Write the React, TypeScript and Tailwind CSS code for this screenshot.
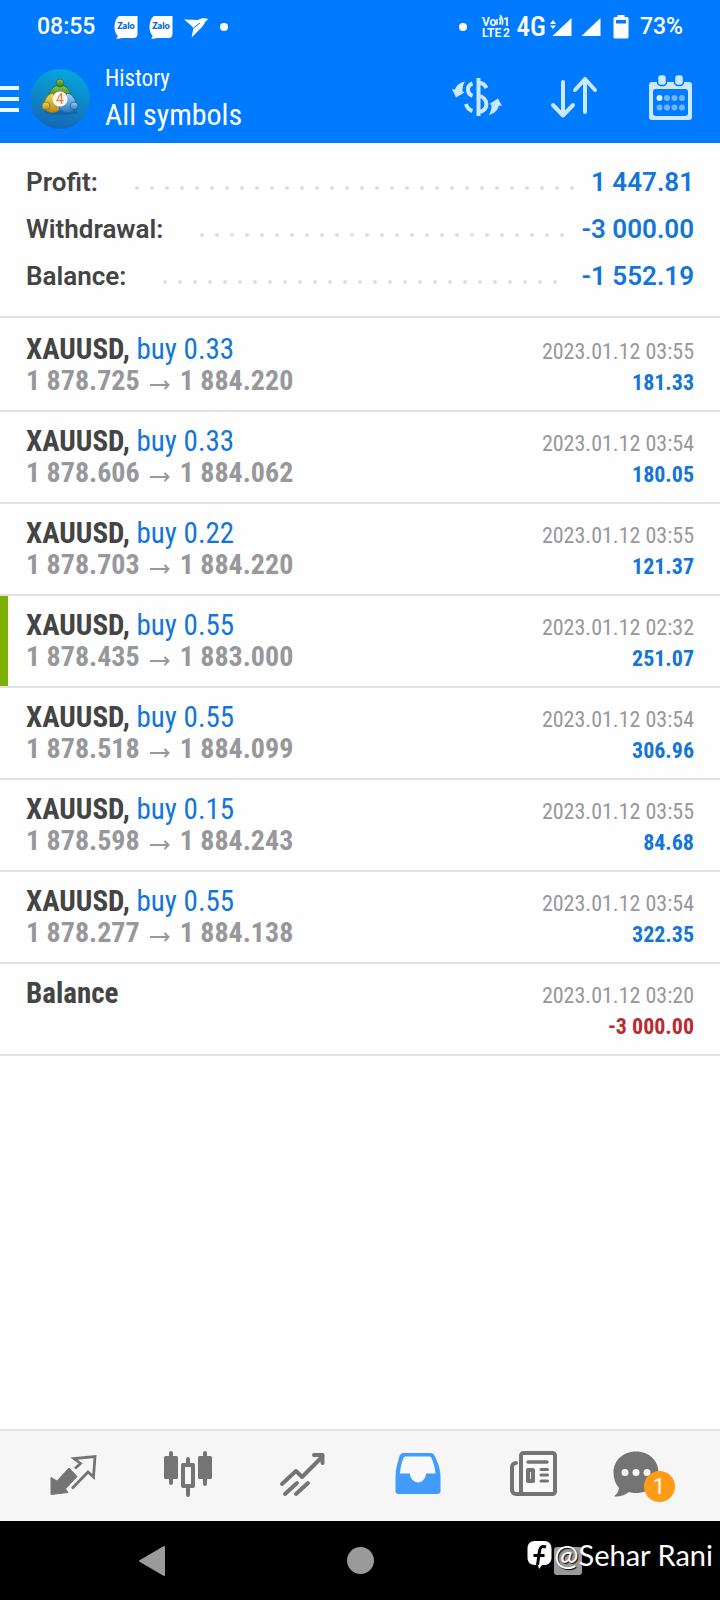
import { ReactNode } from "react";

const CONDENSED =
  "font-['Roboto_Condensed','Roboto','Liberation_Sans_Narrow',sans-serif]";

const summary = [
  { label: "Profit:", value: "1 447.81" },
  { label: "Withdrawal:", value: "-3 000.00" },
  { label: "Balance:", value: "-1 552.19" },
];

const deals = [
  { id: 1, volume: "0.33", open: "1 878.725", close: "1 884.220", time: "2023.01.12 03:55", profit: "181.33" },
  { id: 2, volume: "0.33", open: "1 878.606", close: "1 884.062", time: "2023.01.12 03:54", profit: "180.05" },
  { id: 3, volume: "0.22", open: "1 878.703", close: "1 884.220", time: "2023.01.12 03:55", profit: "121.37" },
  { id: 4, volume: "0.55", open: "1 878.435", close: "1 883.000", time: "2023.01.12 02:32", profit: "251.07", marked: true },
  { id: 5, volume: "0.55", open: "1 878.518", close: "1 884.099", time: "2023.01.12 03:54", profit: "306.96" },
  { id: 6, volume: "0.15", open: "1 878.598", close: "1 884.243", time: "2023.01.12 03:55", profit: "84.68" },
  { id: 7, volume: "0.55", open: "1 878.277", close: "1 884.138", time: "2023.01.12 03:54", profit: "322.35" },
];

function ZaloIcon() {
  return (
    <svg width="24" height="24" viewBox="0 0 24 24">
      <path
        d="M5 1H23.500V19c0 2.500-1.500 4-4 4H8c-2 .8-4 .9-6 .5 1-.8 1.500-1.500 1.700-2.500C1.500 18.500.5 15.500.5 12 .5 7 2 3 5 1z"
        fill="#fff"
      />
      <text
        x="12"
        y="14"
        textAnchor="middle"
        fontSize="9"
        fontWeight="800"
        fontFamily="Lato, sans-serif"
        fill="#0a6cd8"
      >
        Zalo
      </text>
    </svg>
  );
}

function StatusBar() {
  return (
    <div className="flex h-[54px] items-center justify-between px-[37px] font-[Roboto,sans-serif] text-[23px] font-medium">
      <div className="flex items-center">
        <span>08:55</span>
        <div className="ml-[19px] flex items-center gap-[11px]">
          <ZaloIcon />
          <ZaloIcon />
          <svg width="25" height="24" viewBox="0 0 25 24" fill="#fff">
            <path d="M0 4.500l14 .5C17 3 21 3 24.500 4 21 6 20.500 9 18.500 11.500L7.500 22.500l2-9.500-4-4z" />
            <path d="M9.500 13L16 8" stroke="#007aff" strokeWidth="1" />
          </svg>
          <span className="size-2 rounded-full bg-white" />
        </div>
      </div>
      <div className="flex items-center">
        <span className="mr-[14px] size-2 rounded-full bg-white" />
        <svg className="overflow-visible" width="32" height="32" viewBox="-1 -4 32 32" fill="#fff" fontFamily="Roboto, sans-serif" fontWeight="600">
          <text x="0" y="11" fontSize="12">Vo</text>
          <text x="21" y="11" fontSize="12">1</text>
          <text x="0" y="22" fontSize="12">LTE</text>
          <text x="21" y="22" fontSize="12">2</text>
          <path d="M15 4v6M17.500 2.500q2 3.500 0 7M18 0q4 5 2 10" fill="none" stroke="#fff" strokeWidth="1.500" />
        </svg>
        <span className={`${CONDENSED} ml-1 text-[27px]`}>4G</span>
        <svg className="ml-1" width="22" height="20" viewBox="0 0 22 20" fill="#fff">
          <path d="M21.500 1v18H2.500zM3 3l3 4H0zM3 12L0 8.500h6z" />
        </svg>
        <svg className="ml-[9px]" width="20" height="20" viewBox="0 0 20 20" fill="#fff">
          <path d="M19.500 1v18H.5z" />
        </svg>
        <svg className="ml-3" width="16" height="26" viewBox="0 0 16 26">
          <path d="M4.500 1h7v2H14a1.500 1.500 0 0 1 1.500 1.500V23A1.500 1.500 0 0 1 14 24.500H2A1.500 1.500 0 0 1 .5 23V4.500A1.500 1.500 0 0 1 2 3h2.500z" fill="#fff" />
          <path d="M3 6h10v3.500H3z" fill="#007aff" />
        </svg>
        <span className="ml-[11px]">73%</span>
      </div>
    </div>
  );
}

function AppLogo() {
  return (
    <svg width="60" height="60" viewBox="0 0 60 60">
      <defs>
        <linearGradient id="disc" x1="0.6" y1="0" x2="0.4" y2="1">
          <stop offset="0" stopColor="#05a7dc" />
          <stop offset="1" stopColor="#1567b4" />
        </linearGradient>
        <linearGradient id="green" x1="0" y1="0" x2="0" y2="1">
          <stop offset="0" stopColor="#8cc252" />
          <stop offset="1" stopColor="#2f7a2c" />
        </linearGradient>
        <linearGradient id="gold" x1="0" y1="0" x2="0" y2="1">
          <stop offset="0" stopColor="#f0dc55" />
          <stop offset="1" stopColor="#b38a1c" />
        </linearGradient>
        <linearGradient id="sky" x1="0" y1="0" x2="0" y2="1">
          <stop offset="0" stopColor="#9fd4f7" />
          <stop offset="1" stopColor="#2c77c2" />
        </linearGradient>
      </defs>
      <circle cx="30" cy="30" r="30" fill="url(#disc)" />
      <ellipse cx="31" cy="43" rx="17" ry="3" fill="#0c4f92" opacity="0.4" />
      <path d="M19 28c0-7 5-12 11-12s11 5 11 12c-3 4-6 1-11 1s-8 3-11-1z" fill="url(#green)" stroke="#2c6b33" strokeWidth="0.800" />
      <path d="M14 39c-1-7 3-14 9-15 2 6 6 9 8 15-3 6-14 6-17 0z" fill="url(#gold)" stroke="#8a6d1b" strokeWidth="0.800" />
      <path d="M46 39c1-7-3-14-9-15-2 6-6 9-8 15 3 6 14 6 17 0z" fill="url(#sky)" stroke="#225f9c" strokeWidth="0.800" />
      <circle cx="30" cy="14" r="4" fill="url(#green)" stroke="#2c6b33" strokeWidth="0.800" />
      <circle cx="16" cy="37" r="4" fill="url(#gold)" stroke="#8a6d1b" strokeWidth="0.800" />
      <circle cx="44" cy="37" r="4" fill="url(#sky)" stroke="#225f9c" strokeWidth="0.800" />
      <circle cx="30" cy="30" r="7.500" fill="#fdfaf5" />
      <text x="30" y="35" textAnchor="middle" fontSize="14" fontFamily="Roboto, sans-serif" fill="#ea7a3c">
        4
      </text>
    </svg>
  );
}

function Header() {
  return (
    <header className="bg-[#007aff] text-white">
      <StatusBar />
      <div className="flex h-[89px] items-center pr-[26px]">
        <button aria-label="Menu" className="flex w-[19px] flex-col gap-[7px]">
          <span className="h-1 bg-[#e6faff]" />
          <span className="h-1 bg-[#e6faff]" />
          <span className="h-1 bg-[#e6faff]" />
        </button>
        <div className="ml-[11px]">
          <AppLogo />
        </div>
        <div className={`${CONDENSED} ml-[15px]`}>
          <p className="text-[23px] leading-8">History</p>
          <h1 className="text-[30px] leading-10">All symbols</h1>
        </div>
        <div className="ml-auto flex items-center gap-[48px] pb-1 text-[#cbe8ff]">
          <button aria-label="Currency">
            <svg width="50" height="44" viewBox="0 0 50 44" fill="none" stroke="currentColor" strokeWidth="4">
              <path d="M26.500 3v38" />
              <path d="M20.500 8.500c-6 2-6 10 0 12.500M14 29c1 4 3.500 6 6.500 7" />
              <path d="M28 8c3 0 5 2 6.500 5M28 21c8 3 9 13 0 16" />
              <path d="M0 14l3 .5C4.500 10 8 7.500 13 6.500c-2 3-2.500 6-2.500 10l2 1L4 22.500z" fill="currentColor" stroke="none" />
              <path d="M50 31l-3-.5c-1.500 5-4.500 8-10 9.500 2-4 2.500-6 2.500-10l-2-1L46 23.500z" fill="currentColor" stroke="none" />
            </svg>
          </button>
          <button aria-label="Sort">
            <svg width="48" height="44" viewBox="0 0 48 44" fill="none" stroke="currentColor" strokeWidth="4" strokeLinecap="round" strokeLinejoin="round">
              <path d="M13 7v33M3 30l10 10.500L23 30" />
              <path d="M35 37V4M25 15L35 4l10 11" />
            </svg>
          </button>
          <button aria-label="Calendar">
            <svg width="48" height="48" viewBox="-2 0 48 48">
              <path d="M4 9h37a3 3 0 0 1 3 3v32a3 3 0 0 1-3 3H4a3 3 0 0 1-3-3V12a3 3 0 0 1 3-3z" fill="currentColor" />
              <rect x="5" y="16" width="35" height="27" rx="3" fill="#007aff" />
              <g fill="currentColor" stroke="#007aff" strokeWidth="1.500">
                <rect x="9.500" y="1.500" width="9" height="11" rx="3.500" />
                <rect x="26.500" y="1.500" width="9" height="11" rx="3.500" />
              </g>
              <circle cx="11.500" cy="25" r="3" fill="#d9f0ff" />
              <g fill="#6fb6ff">
                <circle cx="19" cy="25" r="3" />
                <circle cx="26.500" cy="25" r="3" />
                <circle cx="34" cy="25" r="3" />
                <circle cx="11.500" cy="34.500" r="3" />
                <circle cx="19" cy="34.500" r="3" />
                <circle cx="26.500" cy="34.500" r="3" />
                <circle cx="34" cy="34.500" r="3" />
              </g>
            </svg>
          </button>
        </div>
      </div>
    </header>
  );
}

// Row of leader dots, only as many as fit on one line
function Leader() {
  return (
    <div className="mt-[11px] mr-[17px] ml-[37px] flex h-1 flex-1 flex-wrap gap-x-[11px] gap-y-2 overflow-hidden">
      {Array.from({ length: 60 }, (_, i) => (
        <span key={i} className="size-1 rounded-full bg-[#dedede]" />
      ))}
    </div>
  );
}

function Summary() {
  return (
    <dl className="border-b-2 border-[#e2e2e2] px-[26px] py-4 font-[Roboto,sans-serif] text-[26px] leading-[47px] font-semibold">
      {summary.map((item) => (
        <div key={item.label} className="flex items-center">
          <dt className="text-[#444]">{item.label}</dt>
          <Leader />
          <dd className="text-[#1475d8]">{item.value}</dd>
        </div>
      ))}
    </dl>
  );
}

type RowProps = {
  title: ReactNode;
  prices?: ReactNode;
  time: string;
  amount: ReactNode;
  marked?: boolean;
};

function Row({ title, prices, time, amount, marked }: RowProps) {
  return (
    <li className="relative border-b-2 border-[#e2e2e2] px-[26px] py-[13px]">
      {marked && <span className="absolute inset-y-0 left-0 w-2 bg-[#7db000]" />}
      <div className="flex items-baseline justify-between">
        <span className="text-[29px] leading-8 font-bold text-[#444]">{title}</span>
        <time className="text-[22px] leading-6 text-[#97989b]">{time}</time>
      </div>
      <div className="flex items-baseline justify-between">
        <span className="flex items-baseline text-[28px] leading-8 font-bold text-[#97989b]">
          {prices ?? "\u00a0"}
        </span>
        <span className="text-[22px] leading-6 font-bold">{amount}</span>
      </div>
    </li>
  );
}

function History() {
  return (
    <ul className={`${CONDENSED} pt-0.5`}>
      {deals.map((deal) => (
        <Row
          key={deal.id}
          marked={deal.marked}
          title={
            <>
              XAUUSD, <span className="font-normal text-[#1475d8]">buy {deal.volume}</span>
            </>
          }
          prices={
            <>
              {deal.open}
              <svg className="mx-[10px]" width="20" height="12" viewBox="0 0 20 12" fill="none" stroke="currentColor" strokeWidth="2">
                <path d="M0 7h18.500M14.500 3L18.500 7l-4 4" />
              </svg>
              {deal.close}
            </>
          }
          time={deal.time}
          amount={<span className="text-[#1475d8]">{deal.profit}</span>}
        />
      ))}
      <Row
        title="Balance"
        time="2023.01.12 03:20"
        amount={<span className="text-[#b92b30]">-3 000.00</span>}
      />
    </ul>
  );
}

function TabBar() {
  return (
    <nav className="grid grid-cols-6 border-t-2 border-[#e2e2e2] bg-[#f6f6f6] px-[15px] py-[19px] text-[#747474] *:flex *:justify-center">
      <button aria-label="Quotes">
        <svg width="48" height="52" viewBox="0 0 48 52">
          <path d="M2 27.500l6 3.500L20 18l8 8.500L16.500 39l2.500 3.500L2 44.500z" fill="currentColor" stroke="currentColor" strokeLinejoin="round" />
          <path d="M26 18.500l5.500-5-6.500-5L46 6.500 44.500 27 39 22 23 38.500" fill="none" stroke="currentColor" strokeWidth="2.800" />
        </svg>
      </button>
      <button aria-label="Charts">
        <svg width="48" height="52" viewBox="0 0 48 52" fill="currentColor">
          <rect x="0" y="6" width="14" height="23" rx="1.500" />
          <rect x="34" y="6" width="14" height="23" rx="1.500" />
          <path d="M7 3v30M41 3v31M24 9v6M24 38v7" stroke="currentColor" strokeWidth="4" strokeLinecap="round" />
          <rect x="19" y="15" width="10" height="21" fill="none" stroke="currentColor" strokeWidth="4" strokeLinejoin="round" />
        </svg>
      </button>
      <button aria-label="Trade">
        <svg width="48" height="52" viewBox="1 -1 48 52" fill="none" stroke="currentColor" strokeWidth="4" strokeLinecap="round" strokeLinejoin="round">
          <path d="M4 33l14-13 6 6L44 6M36 4h8.500v8" />
          <path d="M7 43l12-11M18 43l12-11" />
        </svg>
      </button>
      <button aria-label="History">
        <svg width="48" height="52" viewBox="0 0 48 52">
          <path d="M9 3h28a4 4 0 0 1 3.500 2.500C44 13 46.500 19 46.500 27v14a3 3 0 0 1-3 3h-39a3 3 0 0 1-3-3V27c0-8 2-14 4-21a4 4 0 0 1 3.500-3z" fill="#429bff" />
          <path d="M11.500 6.500h24a2 2 0 0 1 2 1.500c2 5 3.500 9 4 15.500h-9.500a8 9 0 0 1-16 0H6C6.500 17 7.500 13 9.500 8a2 2 0 0 1 2-1.500z" fill="#f9f9f9" />
        </svg>
      </button>
      <button aria-label="News">
        <svg width="48" height="52" viewBox="0 0 48 52" fill="none" stroke="currentColor" strokeWidth="4" strokeLinecap="round" strokeLinejoin="round">
          <rect x="12" y="3" width="34" height="41" rx="2.500" fill="#fafafa" />
          <path d="M7 13a4 4 0 0 0-4 4v23a4 4 0 0 0 4 4h8" />
          <path d="M19 12h19" strokeWidth="3.500" />
          <rect x="19" y="20" width="5" height="11" />
          <path d="M32 19.500h6.500M32 25h6.500M32 31h6.500" strokeWidth="3" />
        </svg>
      </button>
      <button aria-label="Messages, 1 unread">
        <svg width="70" height="52" viewBox="2 0 70 52">
          <path d="M23 1.500c13 0 22.500 9 22.500 21S36 43 23 43c-2.500 0-5-.3-7-1-3.500 3-8.500 5-15 4.500 3-2.500 4.500-5 5-8.500C2.500 34 .5 29 .5 22.500c0-12 9.500-21 22.500-21z" fill="currentColor" transform="translate(2 0)" />
          <g fill="#f6f6f6">
            <circle cx="14" cy="22.500" r="3.500" />
            <circle cx="25" cy="22.500" r="3.500" />
            <circle cx="36" cy="22.500" r="3.500" />
          </g>
          <circle cx="48.500" cy="36.500" r="15.500" fill="#ff9b17" />
          <text x="48" y="44" textAnchor="middle" fontSize="22" fontFamily="Roboto, sans-serif" fill="#fff">
            1
          </text>
        </svg>
      </button>
    </nav>
  );
}

function SystemNav() {
  return (
    <div className="relative grid h-[79px] grid-cols-3 items-center bg-black px-[48px] text-[#9a9a9a] *:flex *:justify-center">
      <button aria-label="Back">
        <svg width="28" height="32" viewBox="0 0 28 32">
          <path d="M26 2v28L2 16z" fill="currentColor" stroke="currentColor" strokeWidth="2" strokeLinejoin="round" />
        </svg>
      </button>
      <button aria-label="Home">
        <span className="size-[27px] rounded-full bg-[#9a9a9a]" />
      </button>
      <button aria-label="Recents">
        <span className="size-7 rounded-[3px] bg-[#9a9a9a]" />
      </button>
      <div className="absolute top-4 right-[7px] items-center gap-0.5 font-[Lato,sans-serif] text-[29px] leading-9 text-white">
        <svg width="25" height="30" viewBox="0 0 25 30">
          <path d="M8 1h9c5 0 7.500 3 7.500 7.500v9c0 4-2 7-6.500 7.500h-3L12 29l-1-4H8C3 25 .5 22 .5 17.500v-9C.5 4 3 1 8 1z" fill="#fff" />
          <path d="M19 7c-4-1.500-6 0-6.500 4L10.500 25M6.500 15.500h11" fill="none" stroke="#000" strokeWidth="3" />
        </svg>
        <span className="[text-shadow:1px_1px_1px_#000]">@Sehar Rani</span>
      </div>
    </div>
  );
}

export default function App() {
  return (
    <div className="flex min-h-screen flex-col bg-[#fefefe]">
      <Header />
      <main className="flex-1">
        <Summary />
        <History />
      </main>
      <TabBar />
      <SystemNav />
    </div>
  );
}
